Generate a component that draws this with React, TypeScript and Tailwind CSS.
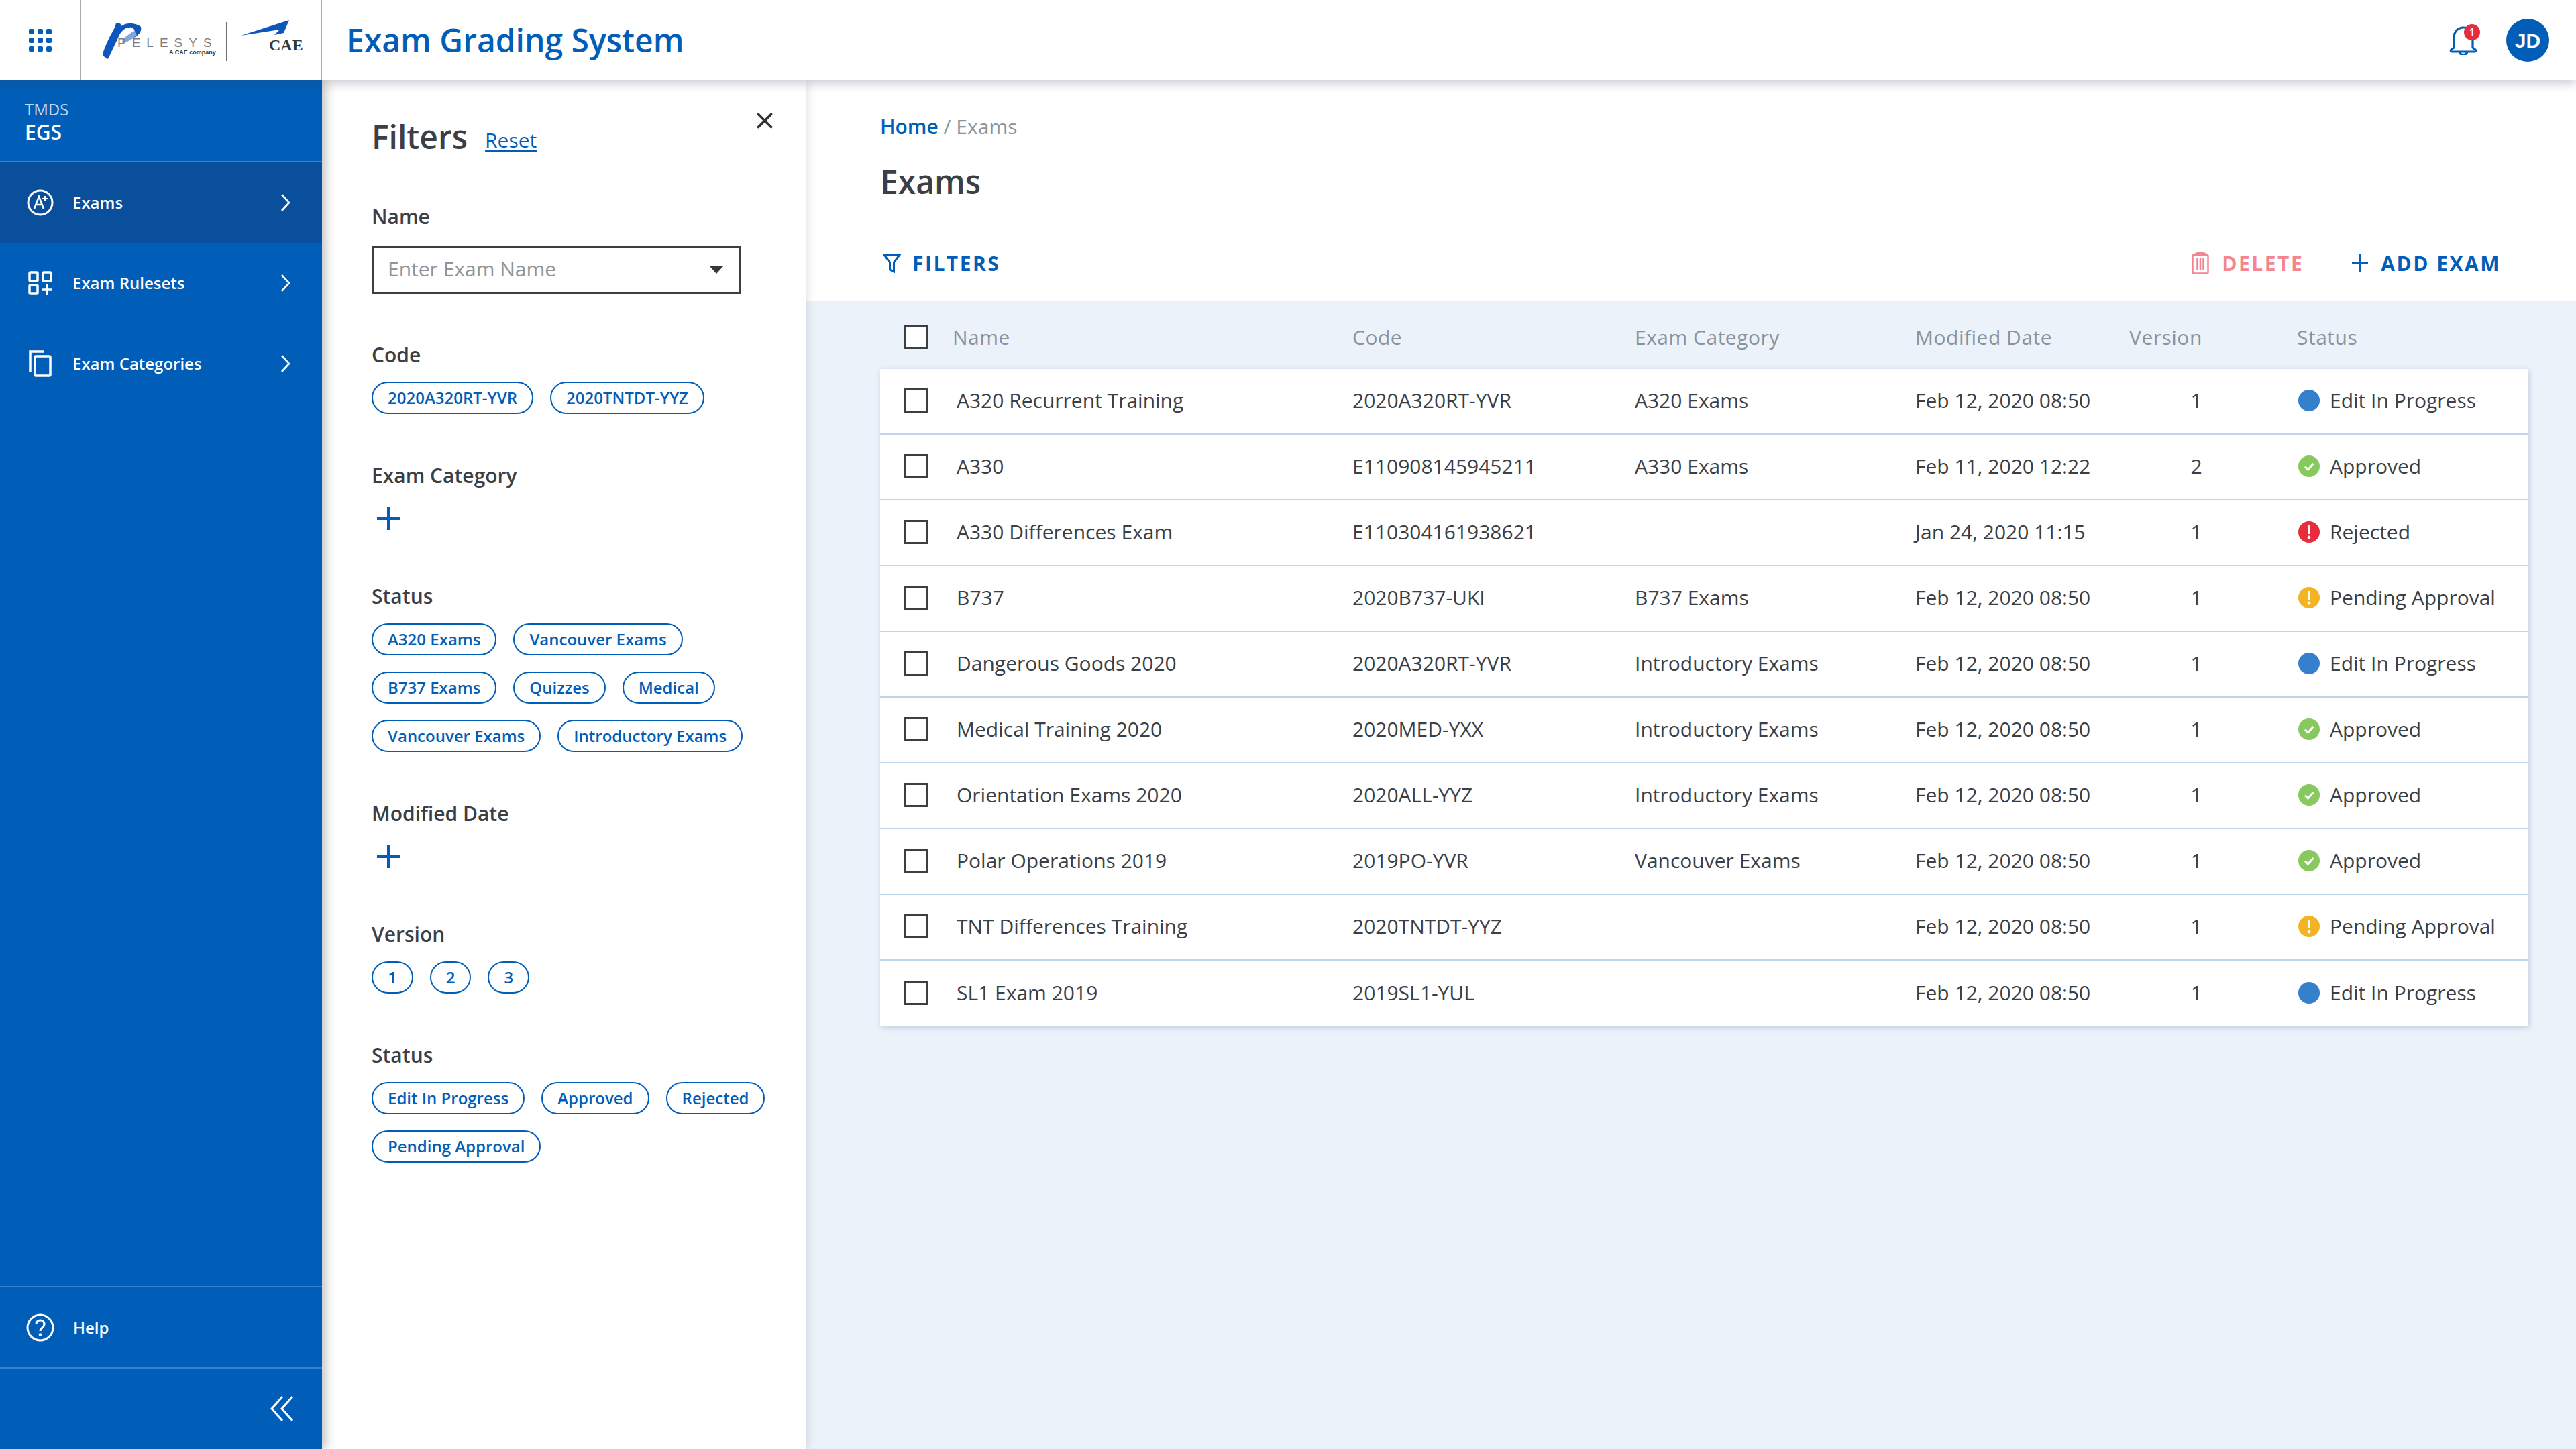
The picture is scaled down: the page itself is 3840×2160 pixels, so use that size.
import React from "react";
import { X } from "lucide-react";

type Status = "Edit In Progress" | "Approved" | "Rejected" | "Pending Approval";

interface ExamRow {
  name: string;
  code: string;
  category: string;
  modified: string;
  version: number;
  status: Status;
}

const exams: ExamRow[] = [
  { name: "A320 Recurrent Training", code: "2020A320RT-YVR", category: "A320 Exams", modified: "Feb 12, 2020 08:50", version: 1, status: "Edit In Progress" },
  { name: "A330", code: "E110908145945211", category: "A330 Exams", modified: "Feb 11, 2020 12:22", version: 2, status: "Approved" },
  { name: "A330 Differences Exam", code: "E110304161938621", category: "", modified: "Jan 24, 2020 11:15", version: 1, status: "Rejected" },
  { name: "B737", code: "2020B737-UKI", category: "B737 Exams", modified: "Feb 12, 2020 08:50", version: 1, status: "Pending Approval" },
  { name: "Dangerous Goods 2020", code: "2020A320RT-YVR", category: "Introductory Exams", modified: "Feb 12, 2020 08:50", version: 1, status: "Edit In Progress" },
  { name: "Medical Training 2020", code: "2020MED-YXX", category: "Introductory Exams", modified: "Feb 12, 2020 08:50", version: 1, status: "Approved" },
  { name: "Orientation Exams 2020", code: "2020ALL-YYZ", category: "Introductory Exams", modified: "Feb 12, 2020 08:50", version: 1, status: "Approved" },
  { name: "Polar Operations 2019", code: "2019PO-YVR", category: "Vancouver Exams", modified: "Feb 12, 2020 08:50", version: 1, status: "Approved" },
  { name: "TNT Differences Training", code: "2020TNTDT-YYZ", category: "", modified: "Feb 12, 2020 08:50", version: 1, status: "Pending Approval" },
  { name: "SL1 Exam 2019", code: "2019SL1-YUL", category: "", modified: "Feb 12, 2020 08:50", version: 1, status: "Edit In Progress" },
];

const rowGrid = "grid grid-cols-[113px_591px_421px_418px_319px_200px_1fr] items-center";

const StatusIcon: React.FC<{ status: Status }> = ({ status }) => {
  const fill =
    status === "Edit In Progress" ? "#3580cc" : status === "Approved" ? "#87c95f" : status === "Rejected" ? "#e72d3c" : "#f2b423";
  return (
    <svg viewBox="0 0 32 32" className="w-8 h-8 shrink-0">
      <circle cx="16" cy="16" r="16" fill={fill} />
      {status === "Approved" && <path d="M10 16.5l4.5 4.5L22.5 12" fill="none" stroke="#fff" strokeWidth="3" />}
      {(status === "Rejected" || status === "Pending Approval") && (
        <>
          <rect x="14" y="6" width="4" height="13" rx="1" fill="#fff" />
          <circle cx="16" cy="24" r="2.4" fill="#fff" />
        </>
      )}
    </svg>
  );
};

const Checkbox: React.FC = () => <div className="w-9 h-9 border-[3px] border-[#3b4044] bg-white" />;

const Chip: React.FC<{ label: string }> = ({ label }) => (
  <div className="h-12 px-[22px] flex items-center rounded-full border-2 border-[#005eb8] text-[24px] font-semibold text-[#005eb8] whitespace-nowrap">
    {label}
  </div>
);

const FilterLabel: React.FC<{ label: string }> = ({ label }) => (
  <div className="h-10 leading-10 text-[30px] font-semibold text-[#3a4045] mb-[20px]">{label}</div>
);

const ChipGroup: React.FC<{ label: string; chips: string[] }> = ({ label, chips }) => (
  <div className="mb-[72px]">
    <FilterLabel label={label} />
    <div className="flex flex-wrap gap-x-[25px] gap-y-6">
      {chips.map((chip, i) => (
        <Chip key={i} label={chip} />
      ))}
    </div>
  </div>
);

const PlusGroup: React.FC<{ label: string }> = ({ label }) => (
  <div className="mb-[72px]">
    <FilterLabel label={label} />
    <div className="h-12 flex items-center pl-2">
      <svg viewBox="0 0 34 34" className="w-[34px] h-[34px]">
        <path d="M17 0v34M0 17h34" stroke="#005eb8" strokeWidth="4" />
      </svg>
    </div>
  </div>
);

const NavItem: React.FC<{ label: string; active?: boolean; icon: React.ReactNode }> = ({ label, active, icon }) => (
  <div className={`h-[120px] flex items-center pl-[40px] pr-[46px] ${active ? "bg-[#0a4f9c]" : ""}`}>
    <div className="w-10 h-10 flex items-center justify-center mr-[28px]">{icon}</div>
    <span className="flex-1 text-[24px] font-semibold text-white">{label}</span>
    <svg viewBox="0 0 16 26" className="w-4 h-[26px]" fill="none" stroke="#fff" strokeWidth="2.6">
      <path d="M2 1l11 12L2 25" />
    </svg>
  </div>
);

const Logo: React.FC = () => (
  <div className="relative w-[359px] h-[120px] shrink-0 border-r-2 border-[#a9abae]">
    <svg viewBox="0 0 60 56" className="absolute left-[31px] top-[33px] w-[60px] h-[56px]">
      <path d="M21 1 C26 1 30 3 29 6 C34 1 50 0 58 7 C60 14 54 20 46 24 C50 16 50 10 44 8 C36 7 30 12 26 19 C21 30 15 42 9 55 L1 50 C1 44 6 34 11 23 C15 15 20 8 21 1Z" fill="#0d56bd" />
      <path d="M31 25 L47 13 L52 18 C50 22 44 26 36 30 L30 30Z" fill="#7fa8de" />
    </svg>
    <span className="absolute left-[54px] top-[51px] text-[19px] leading-[26px] tracking-[9px] text-[#7a7e82] font-['Liberation_Sans',sans-serif]">PELESYS</span>
    <span className="absolute left-[131px] top-[72px] text-[9px] leading-[13px] font-bold text-[#33383c] font-['Liberation_Sans',sans-serif] whitespace-nowrap">A CAE company</span>
    <div className="absolute left-[216px] top-[33px] w-[2px] h-[58px] bg-[#6c7075]" />
    <svg viewBox="0 0 72 24" className="absolute left-[238px] top-[30px] w-[72px] h-[24px]">
      <path d="M0 23 L72 0 L64 19 L50 22 L58 14 Z" fill="#0d56bd" />
    </svg>
    <span className="absolute left-[280px] top-[54px] text-[24px] leading-[26px] font-bold text-[#33383c] font-['Liberation_Serif',serif]">CAE</span>
  </div>
);

const App: React.FC = () => {
  return (
    <div className="w-[3840px] h-[2160px] flex flex-col overflow-hidden bg-white font-['Open_Sans',sans-serif]">
      {/* top bar */}
      <header className="relative z-20 h-[120px] shrink-0 flex items-center bg-white shadow-[0_4px_14px_rgba(60,70,90,0.28)]">
        <div className="w-[121px] h-full shrink-0 flex items-center justify-center border-r-2 border-[#a9abae]">
          <div className="grid grid-cols-3 gap-[5px]">
            {Array.from({ length: 9 }).map((_, i) => (
              <div key={i} className="w-2 h-2 rounded-[2px] bg-[#005eb8]" />
            ))}
          </div>
        </div>
        <Logo />
        <h1 className="ml-[36px] flex-1 text-[48px] font-semibold text-[#005eb8]">Exam Grading System</h1>
        <div className="relative w-[42px] h-[44px] mr-[43px]">
          <svg viewBox="0 0 42 44" className="w-[42px] h-[44px]">
            <path d="M7 33V18C7 9 13 3 21 3s14 6 14 15v15l4 3c1 1 1 3-1 3H4c-2 0-2-2-1-3zM15 39c1 6 11 6 12 0" fill="none" stroke="#005eb8" strokeWidth="3.2" strokeLinejoin="round" />
          </svg>
          <div className="absolute -right-[4px] -top-[2px] w-6 h-6 rounded-full bg-[#e72d3c] text-white text-[16px] leading-6 text-center font-semibold">1</div>
        </div>
        <div className="w-16 h-16 mr-[40px] rounded-full bg-[#005eb8] flex items-center justify-center text-white text-[30px] font-bold font-['Liberation_Sans',sans-serif]">JD</div>
      </header>

      <div className="flex-1 flex min-h-0">
        {/* sidebar */}
        <aside className="relative z-10 w-[480px] shrink-0 flex flex-col bg-[#005eb8] text-white shadow-[6px_0_14px_rgba(60,60,60,0.3)]">
          <div className="h-[122px] border-b-2 border-[#3a80c8] pl-[37px] pt-[28px]">
            <div className="text-[24px] leading-[30px] text-[#c3d8ef]">TMDS</div>
            <div className="text-[30px] leading-[38px] font-semibold">EGS</div>
          </div>
          <NavItem
            label="Exams"
            active
            icon={
              <svg viewBox="0 0 40 40" className="w-10 h-10" fill="none" stroke="#fff">
                <circle cx="20" cy="20" r="18" strokeWidth="3" />
                <path d="M11 29l7-18 7 18M13.500 23h9" strokeWidth="2.6" />
                <path d="M27 10v8M23 14h8" strokeWidth="2.2" />
              </svg>
            }
          />
          <NavItem
            label="Exam Rulesets"
            icon={
              <svg viewBox="0 0 36 36" className="w-9 h-9" fill="none" stroke="#fff" strokeWidth="3.5">
                <rect x="2" y="2" width="12" height="13" rx="1.500" />
                <rect x="22" y="2" width="12" height="13" rx="1.500" />
                <rect x="2" y="21" width="12" height="13" rx="1.500" />
                <path d="M28 20v16M20 28h16" />
              </svg>
            }
          />
          <NavItem
            label="Exam Categories"
            icon={
              <svg viewBox="0 0 34 40" className="w-[34px] h-10" fill="none" stroke="#fff" strokeWidth="3.500">
                <path d="M22 2H2v30" />
                <rect x="9" y="9" width="23" height="29" rx="1.500" />
              </svg>
            }
          />
          <div className="flex-1" />
          <div className="h-[123px] border-t-2 border-b-2 border-[#3a80c8] flex items-center pl-[39px]">
            <svg viewBox="0 0 42 42" className="w-[42px] h-[42px] mr-[28px]" fill="none" stroke="#fff" strokeWidth="3">
              <circle cx="21" cy="21" r="19" />
              <path d="M15 16c0-8 12-8 12 0 0 5-6 5-6 10" strokeWidth="3.200" />
              <circle cx="21" cy="31.500" r="2.200" fill="#fff" stroke="none" />
            </svg>
            <span className="text-[24px] font-semibold">Help</span>
          </div>
          <div className="h-[120px] flex items-center justify-end pr-[43px]">
            <svg viewBox="0 0 34 38" className="w-[34px] h-[38px]" fill="none" stroke="#fff" strokeWidth="3">
              <path d="M18 1L2 19l16 18M33 1L17 19l16 18" />
            </svg>
          </div>
        </aside>

        {/* filter panel */}
        <section className="relative w-[722px] shrink-0 bg-white pl-[74px] pr-[24px] shadow-[4px_0_10px_rgba(60,70,90,0.12)]">
          <div className="flex items-baseline h-[183px] pt-[52px]">
            <h2 className="text-[48px] leading-[64px] font-semibold text-[#3a4045]">Filters</h2>
            <a className="ml-[26px] text-[30px] leading-[40px] -translate-y-[2px] text-[#005eb8] underline underline-offset-4">Reset</a>
          </div>
          <X className="absolute left-[641px] top-[41px] w-[38px] h-[38px] text-[#2d3236]" strokeWidth={2.4} />
          <div className="mb-[71px]">
            <div className="h-10 leading-10 text-[30px] font-semibold text-[#3a4045] mb-[23px]">Name</div>
            <div className="w-[550px] h-[72px] border-[3px] border-[#3b4044] flex items-center justify-between pl-[21px] pr-[23px]">
              <span className="text-[30px] text-[#8f9599] -translate-y-[2px]">Enter Exam Name</span>
              <div className="w-0 h-0 border-x-[10px] border-x-transparent border-t-[11px] border-t-[#33383c]" />
            </div>
          </div>
          <ChipGroup label="Code" chips={["2020A320RT-YVR", "2020TNTDT-YYZ"]} />
          <PlusGroup label="Exam Category" />
          <ChipGroup
            label="Status"
            chips={["A320 Exams", "Vancouver Exams", "B737 Exams", "Quizzes", "Medical", "Vancouver Exams", "Introductory Exams"]}
          />
          <PlusGroup label="Modified Date" />
          <ChipGroup label="Version" chips={["1", "2", "3"]} />
          <ChipGroup label="Status" chips={["Edit In Progress", "Approved", "Rejected", "Pending Approval"]} />
        </section>

        {/* main content */}
        <main className="flex-1 flex flex-col min-w-0">
          <div className="h-[328px] shrink-0 bg-white pl-[110px] pr-[112px] pt-[49px]">
            <div className="h-10 leading-10 text-[30px] text-[#8a939b]">
              <span className="font-semibold text-[#005eb8]">Home</span> / Exams
            </div>
            <h2 className="mt-[32px] h-[60px] leading-[60px] text-[48px] font-semibold text-[#3a4045]">Exams</h2>
            <div className="mt-[66px] h-[50px] flex items-center">
              <svg viewBox="0 0 27 29" className="w-[27px] h-[29px] ml-[4px] mr-[17px]" fill="none" stroke="#005eb8" strokeWidth="3">
                <path d="M2 2h23l-8.500 11v14l-6-3V13z" />
              </svg>
              <span className="text-[30px] font-bold tracking-[2.5px] text-[#005eb8]">FILTERS</span>
              <div className="flex-1" />
              <svg viewBox="0 0 26 34" className="w-[26px] h-[34px] mr-[19px]" fill="none" stroke="#f4858e" strokeWidth="2.500">
                <rect x="1.500" y="5" width="23" height="27.500" rx="1.500" />
                <path d="M5 3h16M8 1.500h10M8.500 10v18M13 10v18M17.500 10v18" />
              </svg>
              <span className="text-[30px] font-bold tracking-[2.5px] text-[#f4858e]">DELETE</span>
              <svg viewBox="0 0 24 28" className="w-6 h-7 ml-[72px] mr-[19px]" fill="none" stroke="#005eb8" strokeWidth="3">
                <path d="M12 0v28M0 14h24" />
              </svg>
              <span className="text-[30px] font-bold tracking-[2.5px] text-[#005eb8]">ADD EXAM</span>
            </div>
          </div>

          <div className="flex-1 bg-[#ebf2fa] pl-[110px] pr-[72px]">
            <div className={`${rowGrid} h-[102px] pt-[6px] text-[30px] font-medium tracking-[0.5px] text-[#8a939b]`}>
              <div className="pl-[36px]"><Checkbox /></div>
              <div className="-ml-[5px]">Name</div>
              <div>Code</div>
              <div>Exam Category</div>
              <div>Modified Date</div>
              <div>Version</div>
              <div className="pl-[50px]">Status</div>
            </div>
            <div className="bg-white shadow-[2px_2px_8px_rgba(60,90,130,0.25)]">
              {exams.map((exam, i) => (
                <div
                  key={exam.name}
                  className={`${rowGrid} h-[98px] pb-[3px] text-[30px] text-[#3a4045] ${i < exams.length - 1 ? "border-b-2 border-[#bdd6ee]" : ""}`}
                >
                  <div className="pl-[36px]"><Checkbox /></div>
                  <div className="whitespace-nowrap pl-px">{exam.name}</div>
                  <div>{exam.code}</div>
                  <div>{exam.category}</div>
                  <div className="whitespace-nowrap">{exam.modified}</div>
                  <div className="text-center">{exam.version}</div>
                  <div className="pl-[52px] flex items-center gap-[15px] whitespace-nowrap">
                    <StatusIcon status={exam.status} />
                    <span>{exam.status}</span>
                  </div>
                </div>
              ))}
            </div>
          </div>
        </main>
      </div>
    </div>
  );
};

export default App;
